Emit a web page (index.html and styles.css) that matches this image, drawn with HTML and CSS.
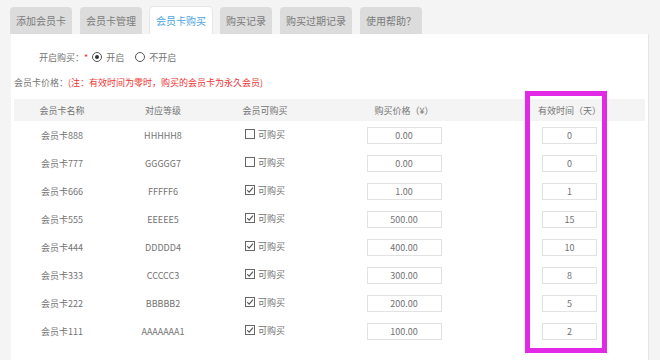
FILE: index.html
```html
<!DOCTYPE html>
<html lang="zh-CN">
<head>
  <meta charset="UTF-8">
  <meta name="viewport" content="width=device-width, initial-scale=1.0">
  <title>会员卡购买</title>
  <link rel="stylesheet" href="styles.css">
</head>
<body>
  <div class="page">
    <!-- Tabs -->
    <ul class="tabs">
      <li class="tab">添加会员卡</li>
      <li class="tab">会员卡管理</li>
      <li class="tab active">会员卡购买</li>
      <li class="tab">购买记录</li>
      <li class="tab">购买过期记录</li>
      <li class="tab">使用帮助？</li>
    </ul>

    <div class="panel">
      <div class="open-row">
        <span class="label">开启购买：<em>*</em></span>
        <label class="radio"><span class="dot checked"></span>开启</label>
        <label class="radio"><span class="dot"></span>不开启</label>
      </div>

      <div class="price-note">会员卡价格：<span class="note">(注：有效时间为零时，购买的会员卡为永久会员)</span></div>

      <table class="cards">
        <thead>
          <tr>
            <th class="c-name">会员卡名称</th>
            <th class="c-level">对应等级</th>
            <th class="c-buy">会员可购买</th>
            <th class="c-price">购买价格（¥）</th>
            <th class="c-time">有效时间（天）</th>
          </tr>
        </thead>
        <tbody id="rows"></tbody>
      </table>
    </div>

    <!-- Annotation box over the time column -->
    <div class="highlight"></div>
  </div>

  <script>
    const cards = [
      { name: "会员卡888", level: "HHHHH8", buy: false, price: "0.00", days: 0 },
      { name: "会员卡777", level: "GGGGG7", buy: false, price: "0.00", days: 0 },
      { name: "会员卡666", level: "FFFFF6", buy: true, price: "1.00", days: 1 },
      { name: "会员卡555", level: "EEEEE5", buy: true, price: "500.00", days: 15 },
      { name: "会员卡444", level: "DDDDD4", buy: true, price: "400.00", days: 10 },
      { name: "会员卡333", level: "CCCCC3", buy: true, price: "300.00", days: 8 },
      { name: "会员卡222", level: "BBBBB2", buy: true, price: "200.00", days: 5 },
      { name: "会员卡111", level: "AAAAAAA1", buy: true, price: "100.00", days: 2 }
    ];

    const tick = '<svg class="box" viewBox="0 0 10 10"><rect x="0.5" y="0.5" width="9" height="9" fill="#fff" stroke="#666"/>' +
      '<path d="M2.2 5.2 L4.2 7.2 L8 2.6" fill="none" stroke="#555" stroke-width="1.1"/></svg>';
    const empty = '<svg class="box" viewBox="0 0 10 10"><rect x="0.5" y="0.5" width="9" height="9" fill="#fff" stroke="#666"/></svg>';

    const body = document.getElementById("rows");
    cards.forEach(card => {
      const tr = document.createElement("tr");
      tr.innerHTML =
        '<td>' + card.name + '</td>' +
        '<td>' + card.level + '</td>' +
        '<td><span class="check">' + (card.buy ? tick : empty) + '可购买</span></td>' +
        '<td><input class="price" type="text" value="' + card.price + '"></td>' +
        '<td><input class="days" type="text" value="' + card.days + '"></td>';
      body.appendChild(tr);
    });
  </script>
</body>
</html>
```

FILE: styles.css
```css
body {
  margin: 0;
  background: #f4f4f4;
  font-family: "Noto Sans CJK SC", "Noto Sans", sans-serif;
  color: #737373;
}
.page {
  position: relative;
  padding: 7px 11px 0 11px;
}
.tabs {
  list-style: none;
  margin: 0;
  padding: 0;
  display: flex;
  gap: 8px;
}
.tab {
  height: 27px;
  line-height: 27px;
  padding: 0 6px;
  font-size: 10px;
  color: #7a7a7a;
  background: #dcdcdc;
  border-radius: 4px 4px 0 0;
}
.tab:first-child {
  margin-left: -1px;
}
.tab.active {
  background: #fff;
  color: #4aa5e0;
  box-shadow: 0 0 0 1px #e6e6e6;
  clip-path: inset(-2px -2px 0 -2px);
}
.panel {
  background: #fff;
  border-right: 1px solid #e6e6e6;
  padding: 14px 3px 20px 3px;
  font-size: 9px;
}
.open-row {
  display: flex;
  align-items: center;
  height: 18px;
  padding-left: 25px;
}
.label em {
  font-style: normal;
  color: #e33;
  margin-right: 4px;
}
.radio {
  display: flex;
  align-items: center;
  margin-right: 11px;
}
.dot {
  width: 8px;
  height: 8px;
  border: 1px solid #555;
  border-radius: 50%;
  margin-right: 4px;
  position: relative;
}
.dot.checked::after {
  content: "";
  position: absolute;
  left: 2px;
  top: 2px;
  width: 4px;
  height: 4px;
  border-radius: 50%;
  background: #333;
}
.price-note {
  height: 18px;
  line-height: 18px;
  margin-top: 8px;
}
.note {
  color: #e33;
}
.cards {
  width: 100%;
  margin-top: 7px;
  border-collapse: collapse;
  table-layout: fixed;
}
.cards th {
  height: 22px;
  padding: 0;
  background: #f4f4f4;
  font-weight: normal;
}
.cards td {
  height: 28px;
  padding: 0;
  text-align: center;
}
.c-name { width: 96px; }
.c-level { width: 106px; }
.c-buy { width: 98px; }
.c-price { width: 180px; }
.check {
  display: inline-flex;
  align-items: center;
  gap: 3px;
}
.box {
  width: 10px;
  height: 10px;
}
.cards input {
  box-sizing: border-box;
  height: 17px;
  border: 1px solid #e2e2e2;
  font-family: inherit;
  font-size: 9px;
  color: #737373;
  text-align: center;
  padding: 0;
}
.price {
  width: 75px;
}
.days {
  width: 55px;
}
.highlight {
  position: absolute;
  left: 525px;
  top: 91px;
  width: 82px;
  height: 262px;
  box-sizing: border-box;
  border: 5px solid #e229e6;
}
```
